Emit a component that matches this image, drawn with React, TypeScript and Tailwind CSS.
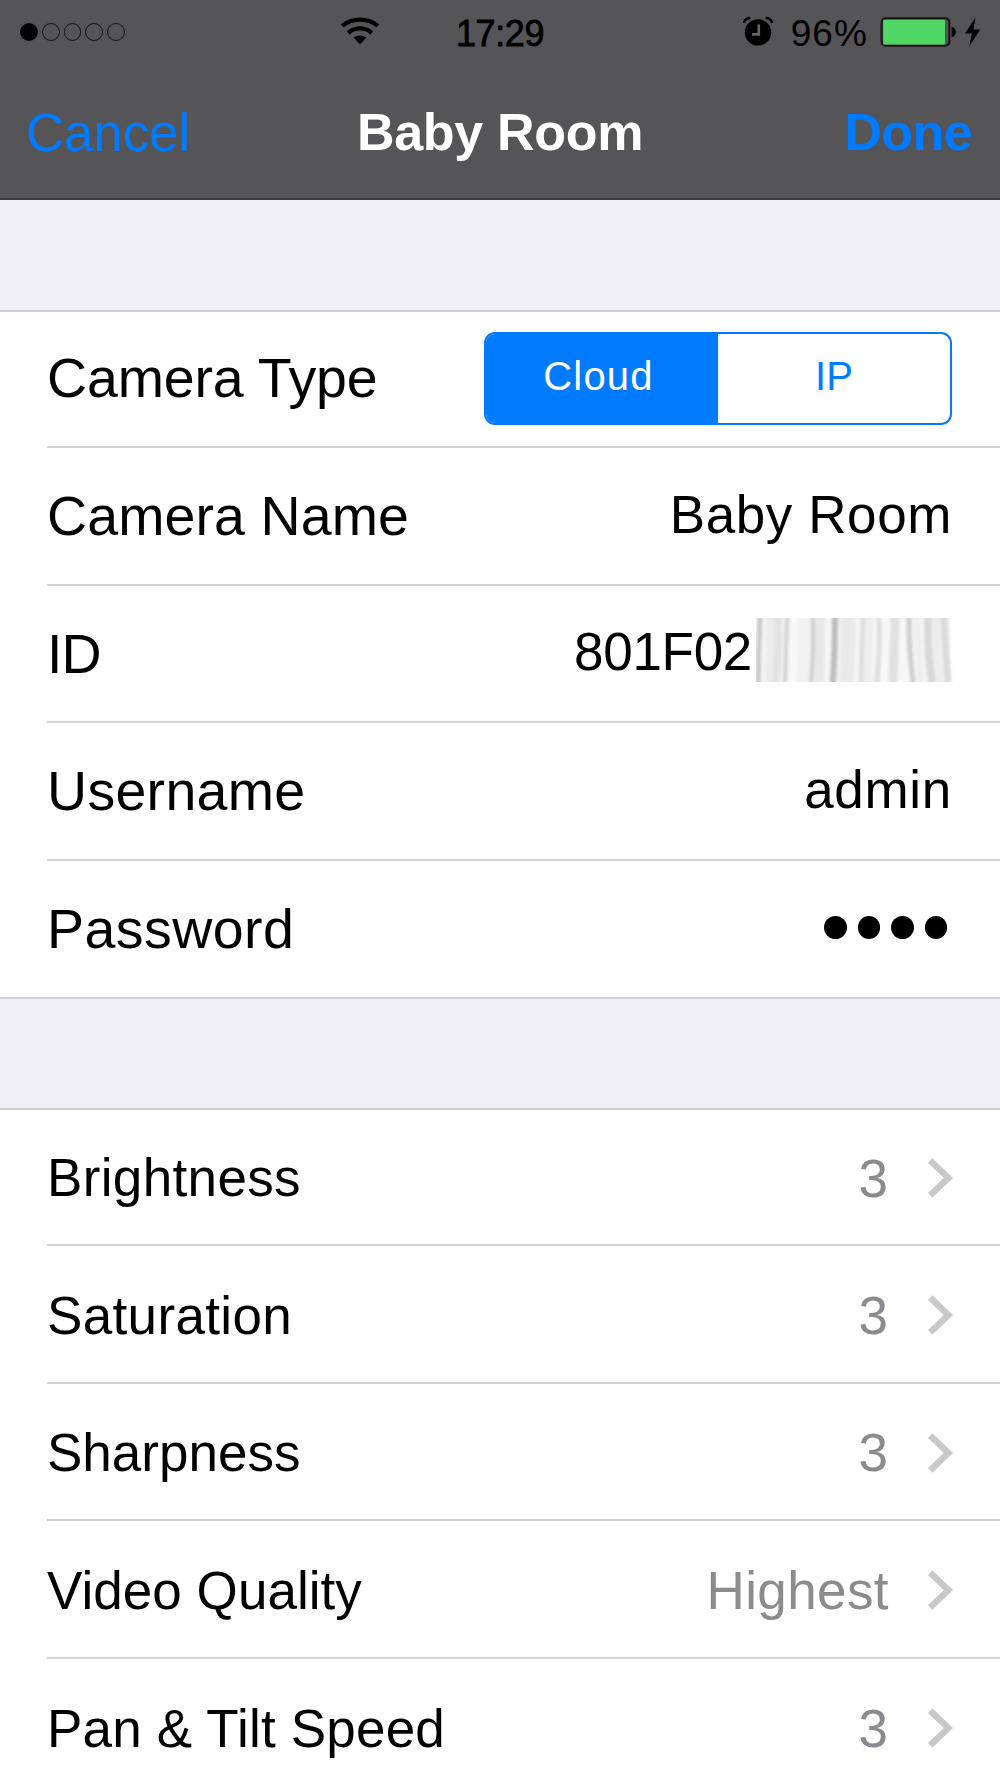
import type { ReactNode } from "react";

function StatusBar() {
  return (
    <div className="grid h-16 grid-cols-[1fr_auto_1fr] items-center">
      <div className="flex items-center">
        <div className="ml-[20px] flex gap-[4px]">
          <span className="size-[17.8px] rounded-full bg-black" />
          {[0, 1, 2, 3].map((i) => (
            <span key={i} className="size-[17.8px] rounded-full border-[1.5px] border-black/80" />
          ))}
        </div>
        <svg className="ml-[215px]" width="40" height="30" viewBox="0 0 40 30">
          <g fill="none" stroke="#000" strokeWidth="4.2">
            <path d="M2.2 8.8 C12 0.6 28 0.6 37.8 8.8" />
            <path d="M8.2 15.8 C15 10 25 10 31.8 15.8" />
          </g>
          <path d="M13.6 20.6 C17.2 17.8 22.8 17.8 26.4 20.6 L20 27.6 Z" />
        </svg>
      </div>
      <span className="pt-[3px] text-[36px] leading-none tracking-[-0.4px] [-webkit-text-stroke:0.8px_black]">17:29</span>
      <div className="flex items-center justify-end pr-[18px]">
        <svg className="mb-[2px]" width="32" height="30" viewBox="0 0 32 30">
          <circle cx="16" cy="16.4" r="13.2" />
          <path d="M2 7 C2.6 3.6 5 2 8.4 2 M30 7 C29.4 3.6 27 2 23.6 2" fill="none" stroke="#000" strokeWidth="2.4" />
          <path d="M16.8 8.5 V18.4 H10" fill="none" stroke="#666668" strokeWidth="2.6" />
        </svg>
        <span className="ml-[17px] pt-[2px] text-[37px] leading-none tracking-[1.1px]">96%</span>
        <svg className="ml-[12px]" width="102" height="32" viewBox="0 0 102 32">
          <rect x="1.6" y="2.2" width="67.8" height="27.6" rx="4" fill="none" stroke="#1b121a" strokeWidth="2" />
          <rect x="3.2" y="3.8" width="61.8" height="24.6" rx="1" fill="#4fd964" />
          <path d="M71.6 11 C77.2 11 77.2 21 71.6 21 Z" />
          <path d="M95.5 1.4 L85 17.6 H91.8 L89.2 30.4 L100.2 13.4 H93.4 Z" />
        </svg>
      </div>
    </div>
  );
}

function NavBar() {
  return (
    <div className="grid h-[134px] grid-cols-[1fr_auto_1fr] items-center px-[25px] pt-[2px] text-[53px] leading-none">
      <button className="pl-px text-left tracking-[-0.2px] text-[#007aff]">Cancel</button>
      <h1 className="text-[52px] font-bold tracking-[-0.3px] text-white">Baby Room</h1>
      <button className="pr-[3px] text-right text-[52px] font-bold tracking-[-0.6px] text-[#007aff]">Done</button>
    </div>
  );
}

function Row({ label, labelClass, rowClass, last, children }: {
  label: string;
  labelClass: string;
  rowClass: string;
  last?: boolean;
  children: ReactNode;
}) {
  return (
    <div className={last ? "" : "pl-[47px]"}>
      <div className={`flex items-center justify-between border-b-2 pr-[47px] ${rowClass} ${last ? "border-[#cfced4] pl-[47px]" : "border-[#d3d3d5]"}`}>
        <span className={`whitespace-nowrap leading-none ${labelClass}`}>{label}</span>
        {children}
      </div>
    </div>
  );
}

function CameraTypeControl() {
  return (
    <div className="mr-px mb-[2px] flex h-[93px] w-[468px] overflow-hidden rounded-[11px] border-[2.4px] border-[#007aff] text-[40px] leading-none">
      <button className="flex w-1/2 items-center justify-center bg-[#007aff] pr-[7px] pb-[4px] tracking-[1.2px] text-white">Cloud</button>
      <button className="flex w-1/2 items-center justify-center pb-[4px] text-[#007aff]">IP</button>
    </div>
  );
}

const streaks = [
  [4, 5, "#c9c9c9"], [16, 12, "#ececec"], [22, 8, "#e2e2e2"], [31, 4, "#d0d0d0"],
  [48, 12, "#f1f1f1"], [57, 4, "#cccccc"], [65, 10, "#e8e8e8"], [79, 6, "#bcbcbc"],
  [92, 15, "#e9e9e9"], [107, 5, "#dddddd"], [114, 7, "#eeeeee"], [123, 5, "#dedede"],
  [139, 9, "#e0e0e0"], [153, 5, "#cdcdcd"], [161, 6, "#ededed"], [172, 8, "#d8d8d8"],
  [180, 7, "#ececec"], [188, 7, "#dadada"],
] as const;

function Redaction() {
  return (
    <svg className="mb-[3px] ml-[4px]" width="197" height="64" viewBox="0 0 197 64">
      <defs>
        <filter id="soft" x="-5%" y="0" width="110%" height="100%">
          <feGaussianBlur stdDeviation="1.7 0" />
        </filter>
      </defs>
      <rect width="194" height="64" fill="#f7f7f7" />
      <g filter="url(#soft)">
        {streaks.map(([x, w, color], i) => (
          <path
            key={x}
            d={`M${x} 0 Q${x + (i % 3) - 1} 32 ${x + (i > 12 ? 4 : -2)} 64`}
            stroke={color}
            strokeWidth={w}
            fill="none"
          />
        ))}
      </g>
    </svg>
  );
}

function Disclosure({ value, valueClass }: { value: string; valueClass: string }) {
  return (
    <div className="flex items-center pt-[2px]">
      <span className={`text-[53px] leading-none text-[#8a8a8f] ${valueClass}`}>{value}</span>
      <svg width="26" height="40" viewBox="0 0 26 40" fill="none">
        <path d="M3.2 2.6 L21.4 20 L3.2 37.4" stroke="#c7c7cc" strokeWidth="6.4" />
      </svg>
    </div>
  );
}

export default function App() {
  return (
    <div className="h-[1778px] w-[1000px] overflow-hidden bg-[#efeef4] font-['Liberation_Sans',Arial,sans-serif] text-black">
      <header className="h-[200px] border-b-2 border-[#3c3c3e] bg-[#555557]">
        <StatusBar />
        <NavBar />
      </header>

      <section className="mt-[110px] border-t-2 border-[#cfced4] bg-white">
        <Row label="Camera Type" rowClass="h-[136px]" labelClass="text-[55.5px] tracking-[-0.15px]">
          <CameraTypeControl />
        </Row>
        <Row label="Camera Name" rowClass="h-[138px]" labelClass="pt-[2px] text-[55.5px] tracking-[0.1px]">
          <span className="pr-px pb-[3px] text-[53px] leading-none tracking-[0.6px]">Baby Room</span>
        </Row>
        <Row label="ID" rowClass="h-[137px]" labelClass="pt-[2px] text-[55.5px] tracking-[-1px]">
          <div className="flex items-center pb-[4px]">
            <span className="text-[53px] leading-none tracking-[-0.3px]">801F02</span>
            <Redaction />
          </div>
        </Row>
        <Row label="Username" rowClass="h-[138px]" labelClass="pt-[2px] text-[55.5px] tracking-[0.3px]">
          <span className="pr-px pb-[3px] text-[53px] leading-none tracking-[0.7px]">admin</span>
        </Row>
        <Row label="Password" rowClass="h-[138px]" labelClass="pt-[2px] text-[55.5px] tracking-[0.45px]" last>
          <div className="flex gap-[11px] pr-[6px] pb-[3px]">
            {[0, 1, 2, 3].map((i) => (
              <span key={i} className="size-[22.4px] rounded-full bg-black" />
            ))}
          </div>
        </Row>
      </section>

      <section className="mt-[109px] border-t-2 border-[#cfced4] bg-white">
        <Row label="Brightness" rowClass="h-[136px]" labelClass="pt-px text-[53px] tracking-[0.35px]">
          <Disclosure value="3" valueClass="pr-[39px]" />
        </Row>
        <Row label="Saturation" rowClass="h-[138px]" labelClass="pt-[2px] text-[53px] tracking-[0.35px]">
          <Disclosure value="3" valueClass="pr-[39px]" />
        </Row>
        <Row label="Sharpness" rowClass="h-[137px]" labelClass="pt-[2px] text-[53px]">
          <Disclosure value="3" valueClass="pr-[39px]" />
        </Row>
        <Row label="Video Quality" rowClass="h-[138px]" labelClass="pt-[2px] text-[53px] tracking-[0.05px]">
          <Disclosure value="Highest" valueClass="pr-[38px] tracking-[0.4px]" />
        </Row>
        <Row label="Pan & Tilt Speed" rowClass="h-[138px]" labelClass="pt-[2px] text-[53px] tracking-[0.2px]">
          <Disclosure value="3" valueClass="pr-[39px]" />
        </Row>
      </section>
    </div>
  );
}
